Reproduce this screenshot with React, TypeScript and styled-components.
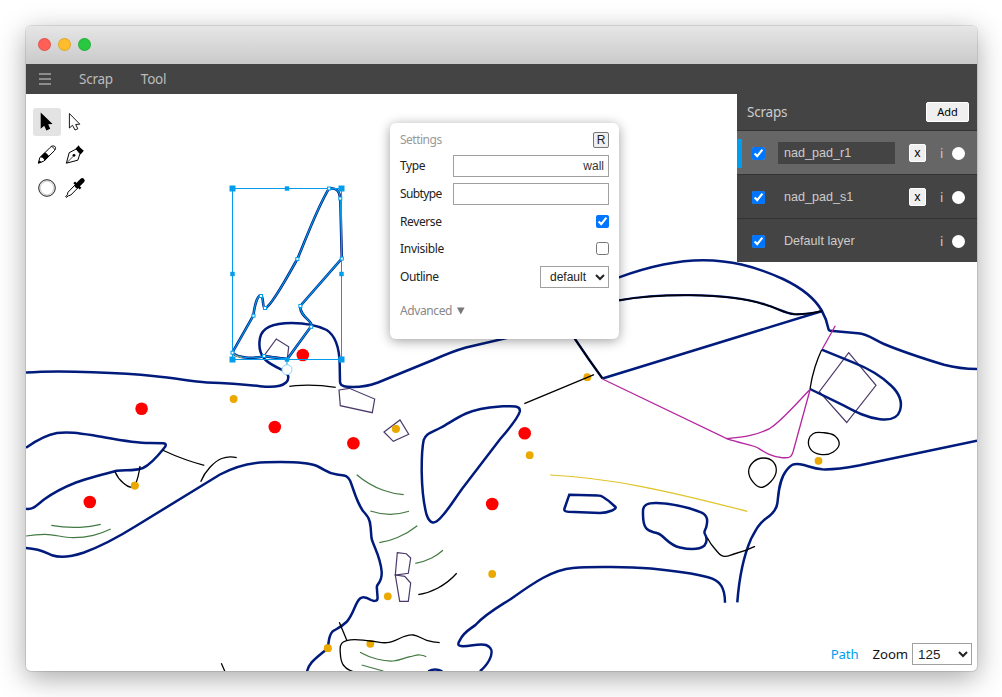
import React from "react";
import styled, { createGlobalStyle, css } from "styled-components";

const GlobalStyle = createGlobalStyle`
  * { box-sizing: border-box; }
  html, body { margin: 0; background: #fff; }
  body { font-family: "Noto Sans", "Open Sans", sans-serif; overflow: hidden; }
  input, select, button { font-family: "Liberation Sans", Arial, sans-serif; margin: 0; }
`;

const Page = styled.div`
  width: 1002px;
  height: 697px;
  padding: 26px 25px 26px 26px;
  background: #fff;
`;

const AppWindow = styled.div`
  width: 951px;
  height: 645px;
  border-radius: 5px;
  display: flex;
  flex-direction: column;
  background: #fff;
  box-shadow: 0 0 0 1px rgba(0, 0, 0, 0.1), 0 7px 28px rgba(0, 0, 0, 0.35);
`;

const TitleBar = styled.div`
  height: 38px;
  flex: none;
  display: flex;
  align-items: center;
  gap: 8px;
  padding: 0 12px 1px;
  border-radius: 5px 5px 0 0;
  background: linear-gradient(#e6e6e6, #cacaca);
`;

const Light = styled.span<{ $color: string }>`
  width: 13px;
  height: 13px;
  margin-right: -1px;
  border-radius: 50%;
  border: 1px solid rgba(0, 0, 0, 0.12);
  background: ${(p) => p.$color};
  background-clip: border-box;
`;

const MenuBar = styled.nav`
  height: 30px;
  flex: none;
  display: flex;
  align-items: center;
  padding-left: 13px;
  background: #444;
`;

const Hamburger = styled.svg`
  display: block;
  width: 13px;
  height: 14px;
  margin-right: 27px;
`;

const MenuItem = styled.span`
  font-size: 13.5px;
  line-height: 30px;
  letter-spacing: -0.25px;
  color: #bbb;
  margin-right: 28px;
`;

const Workspace = styled.main`
  flex: 1;
  position: relative;
  overflow: hidden;
  display: flex;
  justify-content: space-between;
  align-items: flex-start;
  border-radius: 0 0 5px 5px;
`;

const Drawing = styled.svg`
  position: absolute;
  inset: 0;
  display: block;
`;

const ToolPalette = styled.div`
  position: relative;
  display: grid;
  grid-template-columns: 28px 28px;
  row-gap: 5px;
  margin: 14px 0 0 7px;
`;

const ToolButton = styled.div<{ $active?: boolean }>`
  width: 28px;
  height: 28px;
  border-radius: 3px;
  background: ${(p) => (p.$active ? "#e3e3e3" : "transparent")};
  svg { display: block; }
`;

const Sidebar = styled.aside`
  position: relative;
  width: 240px;
  background: #444;
`;

const SidebarHeader = styled.header`
  height: 37px;
  display: flex;
  align-items: center;
  justify-content: space-between;
  padding: 0 8px 1px 10px;
  border-bottom: 1px solid #333;
  font-size: 13.5px;
  letter-spacing: -0.2px;
  color: #ccc;
`;

const AddButton = styled.button`
  width: 43px;
  height: 20px;
  padding: 0;
  border: 1px solid #fff;
  border-radius: 2px;
  background: #efefef;
  color: #000;
  font: 11px "Noto Sans", sans-serif;
`;

const LayerRow = styled.div<{ $selected?: boolean }>`
  height: 44px;
  display: flex;
  align-items: center;
  padding: 1px 12px 0 0;
  border-bottom: 1px solid #333;
  &:last-child { height: 43px; border-bottom: 0; }
  ${(p) => p.$selected && css`background: #666;`}
`;

const SelectedMark = styled.span<{ $on?: boolean }>`
  width: 5px;
  height: 29px;
  margin-right: 10px;
  background: ${(p) => (p.$on ? "#009dec" : "transparent")};
`;

const Check = styled.input.attrs({ type: "checkbox" })`
  width: 13px;
  height: 13px;
  flex: none;
`;

const LayerName = styled.span<{ $selected?: boolean }>`
  width: 117px;
  height: 22px;
  margin-left: 13px;
  padding-left: 6px;
  font: 12.6px/22px "Liberation Sans", Arial, sans-serif;
  color: #ccc;
  background: ${(p) => (p.$selected ? "#444" : "transparent")};
`;

const RemoveSlot = styled.span`
  width: 17px;
  height: 18px;
  margin: 0 14px 0 14px;
`;

const RemoveButton = styled.button`
  display: block;
  width: 17px;
  height: 18px;
  padding: 0;
  border: 1px solid #fff;
  border-radius: 2px;
  background: #efefef;
  color: #000;
  font: 12px/14px "Noto Sans", sans-serif;
`;

const Info = styled.span`
  width: 5px;
  padding-bottom: 1px;
  font-size: 13px;
  line-height: 20px;
  color: #ccc;
`;

const LayerDot = styled.span`
  width: 13px;
  height: 13px;
  margin-left: auto;
  border-radius: 50%;
  background: #fff;
`;

const SettingsPanel = styled.section`
  position: absolute;
  left: 364px;
  top: 29px;
  width: 229px;
  height: 216px;
  padding: 8px 10px;
  border-radius: 6px;
  background: #fff;
  box-shadow: 0 2px 12px rgba(0, 0, 0, 0.38);
`;

const SettingRow = styled.div<{ $height: number; $muted?: boolean }>`
  height: ${(p) => p.$height}px;
  display: flex;
  align-items: center;
  justify-content: space-between;
  font-size: 12px;
  color: ${(p) => (p.$muted ? "#999" : "#222")};
`;

const Label = styled.span<{ $spacing?: number; $lift?: number }>`
  padding-bottom: ${(p) => p.$lift ?? 0}px;
  letter-spacing: ${(p) => p.$spacing ?? -0.4}px;
`;

const TextField = styled.input`
  width: 156px;
  height: 22px;
  padding: 0 4px;
  border: 1px solid #a0a0a0;
  font-size: 12px;
  text-align: right;
  color: #333;
  outline: 0;
`;

const ResetButton = styled.button`
  width: 16px;
  height: 16px;
  padding: 0;
  border: 1px solid #777;
  border-radius: 2px;
  background: #efefef;
  color: #222;
  font-size: 12px;
  line-height: 13px;
`;

const Select = styled.select<{ $width: number; $size: number; $indent: number }>`
  width: ${(p) => p.$width}px;
  height: 22px;
  padding: 0 0 0 ${(p) => p.$indent}px;
  border: 1px solid #a0a0a0;
  border-radius: 0;
  background-color: #fff;
  color: #222;
  font-size: ${(p) => p.$size}px;
`;

const Advanced = styled.div`
  display: flex;
  align-items: center;
  gap: 5px;
  height: 20px;
  margin-top: 7px;
  font-size: 12px;
  color: #888;
`;

const StatusBar = styled.footer`
  position: absolute;
  right: 5px;
  bottom: 6px;
  height: 22px;
  display: flex;
  align-items: center;
  font-size: 13.2px;
  letter-spacing: -0.1px;
  color: #111;
`;

const StatusKind = styled.span`
  margin-right: 14px;
  color: #009dec;
`;

const StatusLabel = styled.span`
  margin-right: 4px;
`;

type Pt = [number, number];

const unit = (x: number, y: number): Pt => {
  const l = Math.hypot(x, y) || 1;
  return [x / l, y / l];
};

// Direction of the curve at q, leaning towards the nearer neighbour.
const tangent = (p: Pt, q: Pt, r: Pt): Pt => {
  const a = unit(q[0] - p[0], q[1] - p[1]);
  const b = unit(r[0] - q[0], r[1] - q[1]);
  const wa = Math.pow(Math.hypot(r[0] - q[0], r[1] - q[1]), 0.6);
  const wb = Math.pow(Math.hypot(q[0] - p[0], q[1] - p[1]), 0.6);
  return unit(a[0] * wa + b[0] * wb, a[1] * wa + b[1] * wb);
};

// Mirrors a direction about a chord, so an end segment bends as one arc.
const mirror = (t: Pt, c: Pt): Pt => {
  const k = 2 * (t[0] * c[0] + t[1] * c[1]);
  return [k * c[0] - t[0], k * c[1] - t[1]];
};

// Turns "x,y x,y ..." into a smooth cubic path; "|" marks a corner shared by two runs.
const smooth = (source: string, closed = false): string =>
  source
    .split("|")
    .map((run) => run.trim().split(/\s+/).map((s) => s.split(",").map(Number) as Pt))
    .reduce<Pt[][]>((runs, pts) => {
      const prev = runs[runs.length - 1];
      return [...runs, prev ? [prev[prev.length - 1], ...pts] : pts];
    }, [])
    .map((pts, runIndex) => {
      const n = pts.length;
      let d = runIndex === 0 ? `M${pts[0]}` : "";
      if (n === 2) return `${d}L${pts[1]}`;
      const dirs = pts.map((q, i) =>
        closed || (i > 0 && i < n - 1) ? tangent(pts[(i - 1 + n) % n], q, pts[(i + 1) % n]) : ([0, 0] as Pt)
      );
      if (!closed) {
        dirs[0] = mirror(dirs[1], unit(pts[1][0] - pts[0][0], pts[1][1] - pts[0][1]));
        dirs[n - 1] = mirror(
          dirs[n - 2],
          unit(pts[n - 1][0] - pts[n - 2][0], pts[n - 1][1] - pts[n - 2][1])
        );
      }
      const count = closed ? n : n - 1;
      for (let i = 0; i < count; i++) {
        const j = (i + 1) % n;
        const p = pts[i];
        const q = pts[j];
        const len = Math.hypot(q[0] - p[0], q[1] - p[1]) * 0.36;
        d += `C${p[0] + dirs[i][0] * len},${p[1] + dirs[i][1] * len} ${q[0] - dirs[j][0] * len},${q[1] - dirs[j][1] * len} ${q}`;
      }
      return d + (closed ? "Z" : "");
    })
    .join("");

const walls = [
  "M26,372.6 C45,371 70,371.2 93,372.3 C115,373 135,374 153,376 C180,378.5 190,381.5 207,382.4 C225,383 242,384 260,386.2 C272,387.6 281,387.2 286,382.5 C289.5,379 289,374 284.5,371 C276,367 270,364.5 265,359.5 C260,354 258.5,346 260,338 C262,326.5 275,323 291.7,322.9 C308,323 318,325.5 326.7,330 C336,336 339.5,350 339.7,365 L340,382 C340.3,387 347,386.9 353,387 C362,387 370,385.5 378,382.5 L433,360 Q452,351.5 466,347.5 L513,336.5 C550,312 580,290 619,277.3 C650,266 675,260.2 703,260.2 C730,260.5 752,265 783,279 C803,288.5 815,299 821.7,310.5 C826,318 827.5,324 828.5,329 C828.7,330.5 829,330.7 830,330.8 L858,333.2 C868,334 873,339 884,344 C903,352 925,359 944,364.8 C955,367.8 966,369 977,369",
  "M26,447.7 C37,440 48,434.5 57,433 C68,431.5 78,433 93,435.3 C112,438.5 132,443 150,443 L163,443.2 C167,443.4 166,446 164,448.3 C157,457 150,465 143,468 C134,471.5 125,469.5 116.7,470.7 C100,475 88,478 76,482.5 C62,488 53,493 44,499.5 C37,505 33,510 26,508.7",
  "M26,548 C42,549 47,553.5 52,555.3 C60,558 72,556.5 84,552.5 C103,545.5 120,536 136,526 L220,474.5 C236,466 250,462.5 266,462.3 C290,461.5 308,462.5 317,466 C326,470 326,473 337,474.5 C344,475.5 347,474.5 350,480.5 C354,490 356,501 363,511 C368,516.5 370,519 370.6,527 L371.5,538 C373,545.5 380.5,556 381.7,572 C382,583.5 377,583 376.8,587 L377.6,598 C377.5,602 373,601 371,600 C367,597.5 363,596 360,598.5 C355,603 354,613 347,621.5 C341,627.5 336,629 332.5,631.5 C328.5,636 329,641 328,646.5 Q327,649.5 322,653 C315,659 309,663 307,671.5",
  "M725,602.7 C725,588 720.5,580.5 708,577.3 C690,572.5 672,570.5 651,568.5 C630,567 592,566.3 573,568 C552,569.5 532,584 510,599.5 C495,609 485,614.5 476,624.5 C470,629.5 464,631.5 460,640 C457,644.5 458,646 463,646.3 C472,646 480,643 486,645 C492,647.5 492.5,651 490.8,656.5 C489,662 485,667 480,671.3",
  "M428.3,671.3 Q435,667.8 442.3,671.3",
  "M737.3,602.3 C739,580 744,555 751,539 C756,529.5 759,523.5 766,518.5 C772,514.5 776.5,510.5 777.4,503 C778.5,494 779,480 786,471 C791.5,464 794,463.5 800,464.3 C808,465.5 812,468.5 822,469.3 C835,470 848,467.5 860,465.3 L977,440.7",
  "M821.7,349.7 L853,362.3 C870,369 884,378.5 891,385.5 C900,394 902.5,402.5 900,410.5 C897.5,419 890,420.5 880,419.3 C866,417.5 855,411.5 845,406.2 L810,389",
  "M602.5,378.5 L822.3,311",
  "M500,406.5 C483,407.8 474,410 466,413.5 C455,418.5 448,424 440,428 C429,433.5 426.5,433.5 423.7,440 C421.5,450 421.7,462 421.7,472 C422,490 423.5,503 426.5,514.5 C430,524.5 434.5,525 441.3,517 C451,506.5 457,495 465,485 L500,439.3 C511,426.5 518.5,416.5 519.8,411.5 C520.7,405 512,406 500,406.5Z",
  "M656.7,503 C672,503.5 690,508 701,512.3 C708.5,515.5 707.5,521.5 706.5,526 C706,529.5 703.5,531 704.7,533.5 C707,537.5 708,541 704.5,545.5 C698.5,550.5 688,549.3 680,547.5 C668,545 665,536 657.5,533.3 C652,531.5 649,532 646,528 C642.5,523.5 643,518 643,511 C643,504.5 648,502.8 656.7,503Z",
  "M569.3,494.7 L598,495.5 Q601,495.5 603,497 C609,500.5 613,504.5 615.5,507 Q616.5,508.5 612,510.5 Q606,513 600,513 L568.3,511.8 Q563.5,511.5 564.5,508.5 Z",
];

const darkEdges = [
  "M619,300.3 C640,296.5 665,295 690,295.2 C720,295.5 745,298 765,304.5 C778,308.5 786,313.5 794,314.2 C804,314.8 813,313 822.3,311",
  "M560,318 L575,339 Q589,360 602.5,378.5",
];

const blackLines = [
  "821.7,349.7 815,367 810,389",
  "707.3,537.7 715,549 723.3,556.2 734,554 755,546.3",
  "524.3,403.7 594,374.7",
  "289.3,386.3 301.7,385.3 335.7,387.3",
  "418.3,594.7 438,588 456.7,573.3",
  "339.3,622.3 347,640.7",
  "352.7,671.3 343.3,665 340.3,653.3 341.7,643.3 346.7,640.7 370,641 386.7,642.7 413.3,635 426.7,640.3 439.7,642.7",
  "162.3,450 186.7,460 204.3,465.3",
  "200.7,481.7 210,467.2 221.7,458.5 236.7,457.7",
  "115,471.7 123.3,483 130,487 135,485.7|138,476.7 140,466",
  "221.3,663.3 224.7,671",
];

const rocks = [
  "813,433.8 823.3,432.7 835,436 839.2,444 833.3,452 820,454.3 810.7,449.3 808.8,439.5",
  "763.3,458 772.7,461.3 776.3,470 770.7,481.7 760.7,487.3 753.3,482.3 748.7,470.7 753.3,462",
];

const greens = [
  "356.7,474.7 383.3,490.3 403.7,494.7",
  "370.3,511 390,514.3 409,511.3",
  "379.3,542.7 397.5,537.5 417.3,525.7",
  "415.3,563.3 431.7,558 443,550.3",
  "360,652.3 376.7,659 393.3,661 410,656.7 420,655 426.3,656.7",
  "361.7,665 383.3,671",
  "51.3,525.3 80,527.3 100.7,524.3",
  "26,536 45,534.3 73.3,537.7 93.3,535.3 110.7,529",
];

const magentas = [
  "M602.5,379 L726.7,438.7 C745,437 757,435 770,428.3 C781,421.5 795,405 810,389.5",
  "M726.7,438.7 C740,443.5 752,444.5 758,448 C765,452.5 770,456 781,457.5 C790,458.5 791.5,457 793,452 L810,390",
  "M822.3,349 L835.3,325.7",
];

const boulders = [
  "848.7,352.7 876,385.3 846.7,422.5 819.3,391.7",
  "339,390 349.3,388.3 374.7,399 372.3,412.7 340.3,405.7",
  "384,432 400,420 408.7,434.3 393.3,441.3",
  "264.3,355.3 276.3,339 288.7,346.7 287.3,358.7",
  "397.3,552.7 406.3,553.7 410.7,558 408.3,573.3 395.3,575",
  "395.3,575 404.7,576.3 410.7,583 408.3,601.3 399.7,601.3",
];

const redPoints: Pt[] = [
  [141.6, 408.8], [89.8, 502], [274.8, 427], [353.4, 443.3], [302.8, 355], [524.7, 433.2], [492.2, 504],
];

const orangePoints: Pt[] = [
  [233.6, 399], [134.8, 485.6], [395.9, 428.8], [587.3, 377.2], [529.7, 455.2],
  [492.2, 574], [387.8, 596.3], [327.8, 648.2], [370.3, 643.8], [818.5, 460.8],
];

const selectedWall =
  "M232.3,352.7 L253.3,315.7 C255,303 258,295 260.8,295.3 C264,296 262,308 265,308.3 C269,307.5 283,285 297.3,259 C303,247 315,212 329,188.3 C338,188 339.5,192 340.3,198.3 L341.8,258.5 L300.3,306 C299.5,315 309,319 311,323.5 Q312,326 309.5,328.5 L287.3,359 L264,356.2 C252,359 238,358 232.3,352.7";

const nodes: Pt[] = [
  [232.5, 352.7], [253.5, 315.7], [261, 296], [265, 308], [297.4, 259], [329.1, 188.5],
  [340.3, 198.5], [341.8, 258.6], [300.4, 306], [311.2, 326.8], [264.1, 356],
];

const corners: Pt[] = [[232.5, 188.5], [341.5, 188.5], [232.5, 359.5], [341.5, 359.5]];
const edgeMids: Pt[] = [[287, 188.5], [232.5, 274], [341.5, 274], [287, 359.5]];

const CaveMap = () => (
  <Drawing width="951" height="577" viewBox="26 94 951 577" fill="none">
    {boulders.map((p) => (
      <polygon key={p} points={p} stroke="#4b3a69" strokeWidth="1.2" />
    ))}
    {orangePoints.map(([x, y]) => (
      <circle key={`${x}-${y}`} cx={x} cy={y} r="3.9" fill="#eba900" />
    ))}
    {greens.map((p) => (
      <path key={p} d={smooth(p)} stroke="#437a43" strokeWidth="1.2" />
    ))}
    <path d="M550,475 C610,478 665,490 747.3,511.3" stroke="#e0c429" strokeWidth="1.2" />
    {walls.map((d) => (
      <path key={d} d={d} stroke="#001b7c" strokeWidth="2.5" />
    ))}
    {darkEdges.map((d) => (
      <g key={d}>
        <path d={d} stroke="#001b7c" strokeWidth="2.3" />
        <path d={d} stroke="#000" strokeWidth="1.5" />
      </g>
    ))}
    {magentas.map((d) => (
      <path key={d} d={d} stroke="#b4259e" strokeWidth="1.3" />
    ))}
    {blackLines.map((p) => (
      <path key={p} d={smooth(p)} stroke="#000" strokeWidth="1.3" />
    ))}
    {rocks.map((p) => (
      <path key={p} d={smooth(p, true)} stroke="#000" strokeWidth="1.3" />
    ))}
    {orangePoints.slice(1, 3).concat([orangePoints[7]]).map(([x, y]) => (
      <circle key={`${x}-${y}`} cx={x} cy={y} r="3.9" fill="#eba900" />
    ))}
    {redPoints.map(([x, y]) => (
      <circle key={`${x}-${y}`} cx={x} cy={y} r="6.3" fill="#f00" />
    ))}

    <path d={selectedWall} stroke="#001b7c" strokeWidth="2.6" />
    <path d={selectedWall} stroke="#009dec" strokeWidth="1.2" />
    <path d="M234,354.5 Q238,357.5 242,357.5" stroke="#c9a43a" strokeWidth="1" />
    <rect x="232.5" y="188.5" width="109" height="171" stroke="#009dec" />
    <path d="M287,360V366" stroke="#009dec" />
    {corners.map(([x, y]) => (
      <rect key={`${x}-${y}`} x={x - 3} y={y - 3} width="6" height="6" fill="#009dec" />
    ))}
    {edgeMids.map(([x, y]) => (
      <rect key={`${x}-${y}`} x={x - 2.2} y={y - 2.2} width="4.4" height="4.4" fill="#009dec" />
    ))}
    {nodes.map(([x, y]) => (
      <rect key={`${x}-${y}`} x={x - 1.5} y={y - 1.5} width="3" height="3" fill="#fff" stroke="#009dec" />
    ))}
    <circle cx="287" cy="369.7" r="5" fill="#fff" stroke="#8fd2f5" />
  </Drawing>
);

const Icon = ({ children }: { children: React.ReactNode }) => (
  <svg width="28" height="28" viewBox="0 0 28 28" fill="none" stroke="#000" strokeWidth="1">
    {children}
  </svg>
);

const Tools = () => (
  <ToolPalette>
    <ToolButton $active>
      <Icon>
        <path d="M7.7 4.5V20.8L11.2 17.8L13.4 22.5L17.2 20.7L15.2 16.3L19.6 15.9Z" fill="#000" stroke="none" />
      </Icon>
    </ToolButton>
    <ToolButton>
      <Icon>
        <path d="M8.4 5.5V20L11.5 17.3L14 22L16.8 20.8L14.7 16.5L18.8 16.2Z" strokeWidth="0.9" />
      </Icon>
    </ToolButton>
    <ToolButton>
      <Icon>
        <path d="M5.4 22.2L6.7 16.9L17.2 6.4C18.6 4.9 20 4.4 21.8 5.4C23.2 6.6 22.6 8.2 21.4 9.7L10.9 20.1Z" fill="#fff" />
        <path d="M7.8 15.8L11.6 12C13.6 12.6 15.2 14.1 15.6 15.6L11.8 19.3C11.4 17.6 10 16.2 7.8 15.8Z" fill="#000" />
        <path d="M5.2 22.5L6 19.4Q8 20 8.6 21.6Z" fill="#000" stroke="none" />
        <path d="M18.2 5.4Q20.8 6 22 9" strokeWidth="0.8" />
      </Icon>
    </ToolButton>
    <ToolButton>
      <Icon>
        <path d="M5.4 22.2L8.2 11.7L15.2 8L19 12.6L16.8 19.2Z" />
        <path d="M5.4 22.2L13 14.5" strokeWidth="0.7" />
        <circle cx="13" cy="14.3" r="1.4" fill="#000" stroke="none" />
        <path d="M14.6 7.6L17.8 4.2L18.8 6.2L22.8 9.8L19.6 13.4Z" fill="#000" stroke="none" />
      </Icon>
    </ToolButton>
    <ToolButton>
      <Icon>
        <circle cx="14" cy="14" r="6.9" stroke="#d4d4d4" strokeWidth="1.4" />
        <circle cx="14" cy="14" r="8.3" stroke="#222" />
      </Icon>
    </ToolButton>
    <ToolButton>
      <Icon>
        <path d="M14.3 10.8L7 18.2L6.3 20.8L4.7 22.8L5.3 23.4L7.4 21.8L9.8 21L17.2 13.6" fill="#fff" />
        <path d="M16 11.7L21.3 6.6" strokeWidth="4.8" strokeLinecap="round" />
        <path d="M13.2 8.4L19.5 14.7" strokeWidth="2.4" />
      </Icon>
    </ToolButton>
  </ToolPalette>
);

const layers = [
  { name: "nad_pad_r1", selected: true, removable: true },
  { name: "nad_pad_s1", selected: false, removable: true },
  { name: "Default layer", selected: false, removable: false },
];

const Scraps = () => (
  <Sidebar>
    <SidebarHeader>
      <span>Scraps</span>
      <AddButton>Add</AddButton>
    </SidebarHeader>
    {layers.map((l) => (
      <LayerRow key={l.name} $selected={l.selected}>
        <SelectedMark $on={l.selected} />
        <Check defaultChecked />
        <LayerName $selected={l.selected}>{l.name}</LayerName>
        <RemoveSlot>{l.removable && <RemoveButton>x</RemoveButton>}</RemoveSlot>
        <Info>i</Info>
        <LayerDot />
      </LayerRow>
    ))}
  </Sidebar>
);

const Settings = () => (
  <SettingsPanel>
    <SettingRow $height={18} $muted>
      <Label $spacing={-0.5} $lift={1}>Settings</Label>
      <ResetButton>R</ResetButton>
    </SettingRow>
    <SettingRow $height={34}>
      <Label $lift={2}>Type</Label>
      <TextField defaultValue="wall" />
    </SettingRow>
    <SettingRow $height={22}>
      <Label $spacing={-0.6} $lift={2}>Subtype</Label>
      <TextField />
    </SettingRow>
    <SettingRow $height={33}>
      <Label>Reverse</Label>
      <Check defaultChecked />
    </SettingRow>
    <SettingRow $height={21}>
      <Label $spacing={-0.3}>Invisible</Label>
      <Check />
    </SettingRow>
    <SettingRow $height={35}>
      <Label>Outline</Label>
      <Select $width={69} $size={12} $indent={5} defaultValue="default">
        <option>default</option>
      </Select>
    </SettingRow>
    <Advanced>
      <Label $lift={1}>Advanced</Label>
      <svg width="8" height="8" viewBox="0 0 8 8">
        <path d="M0 0.5H7.6L3.8 7.5Z" fill="#777" />
      </svg>
    </Advanced>
  </SettingsPanel>
);

export default function App() {
  return (
    <Page>
      <GlobalStyle />
      <AppWindow>
        <TitleBar>
          <Light $color="#ff5f57" />
          <Light $color="#ffbd2e" />
          <Light $color="#28c940" />
        </TitleBar>
        <MenuBar>
          <Hamburger viewBox="0 0 13 14">
            <path d="M0 2H12M0 7H12M0 12H12" stroke="#a5a5a5" strokeWidth="1.6" />
          </Hamburger>
          <MenuItem>Scrap</MenuItem>
          <MenuItem>Tool</MenuItem>
        </MenuBar>
        <Workspace>
          <CaveMap />
          <Tools />
          <Scraps />
          <Settings />
          <StatusBar>
            <StatusKind>Path</StatusKind>
            <StatusLabel>Zoom</StatusLabel>
            <Select $width={60} $size={13.4} $indent={1} defaultValue="125">
              <option>125</option>
            </Select>
          </StatusBar>
        </Workspace>
      </AppWindow>
    </Page>
  );
}
